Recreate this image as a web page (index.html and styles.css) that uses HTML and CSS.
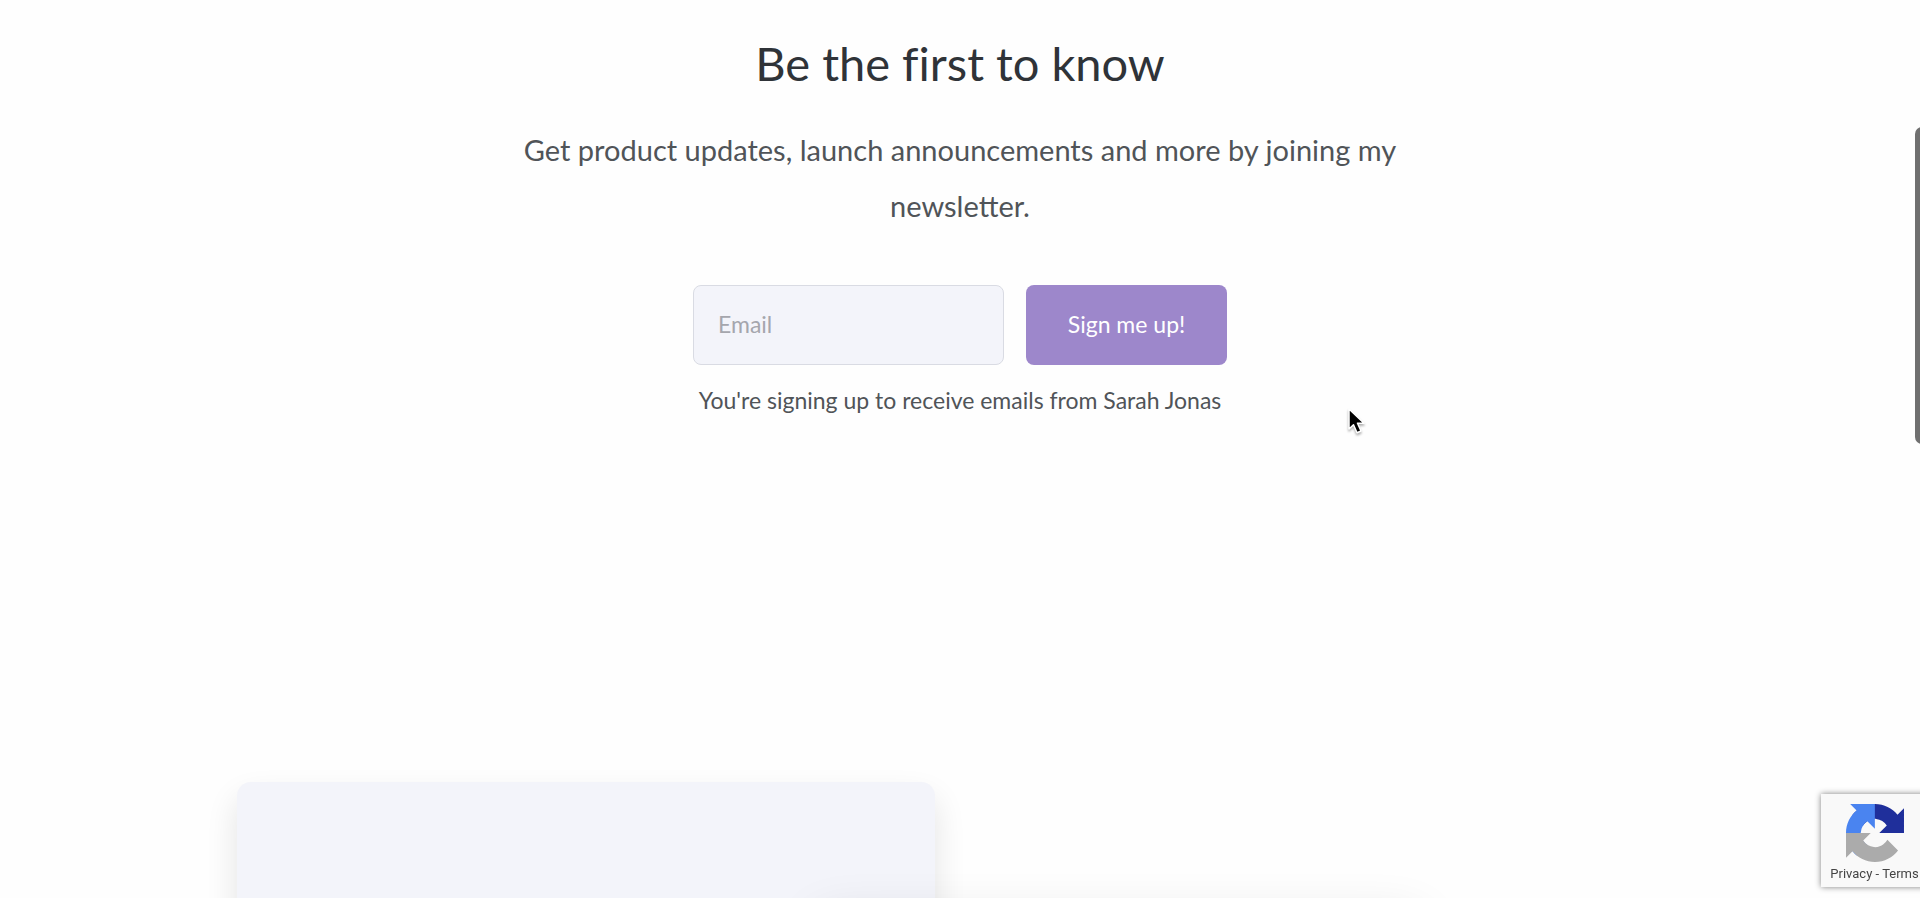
FILE: index.html
```html
<!DOCTYPE html>
<html lang="en">
<head>
<meta charset="utf-8">
<meta name="viewport" content="width=device-width, initial-scale=1">
<title>Be the first to know</title>
<link rel="stylesheet" href="styles.css">
</head>
<body>
<main class="page">
  <section class="newsletter">
    <h1 class="newsletter-title">Be the first to know</h1>
    <p class="newsletter-text">Get product updates, launch announcements and more by joining my newsletter.</p>
    <form class="signup">
      <input class="signup-email" type="email" placeholder="Email" aria-label="Email">
      <button class="signup-button" type="submit">Sign me up!</button>
    </form>
    <p class="signup-note">You're signing up to receive emails from Sarah Jonas</p>
  </section>
  <section class="showcase">
    <div class="card"></div>
    <div class="card-front"></div>
  </section>
</main>
<div class="scroll-thumb"></div>
<aside class="captcha">
  <svg class="captcha-logo" viewBox="0 0 64 64" aria-hidden="true">
    <path fill="#1f2f9b" d="M64 31.955l-.033-1.37V4.687l-7.16 7.16C50.948 4.674 42.033.093 32.05.093c-10.4 0-19.622 4.96-25.458 12.64l11.736 11.86a15.55 15.55 0 0 1 4.754-5.334c2.05-1.6 4.952-2.906 8.968-2.906.485 0 .86.057 1.135.163 4.976.393 9.288 3.14 11.828 7.124l-8.307 8.307L64 31.953"/>
    <path fill="#4a84f0" d="M31.862.094l-1.37.033H4.594l7.16 7.16C4.58 13.147 0 22.06 0 32.046c0 10.4 4.96 19.622 12.64 25.458L24.5 45.768a15.55 15.55 0 0 1-5.334-4.754c-1.6-2.05-2.906-4.952-2.906-8.968 0-.485.057-.86.163-1.135.393-4.976 3.14-9.288 7.124-11.828l8.307 8.307L31.86.095"/>
    <path fill="#ababab" d="M.001 32.045l.033 1.37v25.898l7.16-7.16c5.86 7.173 14.774 11.754 24.76 11.754 10.4 0 19.622-4.96 25.458-12.64l-11.736-11.86a15.55 15.55 0 0 1-4.754 5.334c-2.05 1.6-4.952 2.906-8.968 2.906-.485 0-.86-.057-1.135-.163-4.976-.393-9.288-3.14-11.828-7.124l8.307-8.307c-10.522.04-22.4.066-27.295-.005"/>
  </svg>
  <div class="captcha-links"><a href="#privacy">Privacy</a> - <a href="#terms">Terms</a></div>
</aside>
<svg class="cursor" viewBox="0 0 18 28" aria-hidden="true">
  <path d="M1 1v20l4.500-4.300 3.500 8 4-1.700-3.500-7.800H16z" fill="#000" stroke="#fff" stroke-width="1.500" stroke-linejoin="round"/>
</svg>
</body>
</html>
```
FILE: styles.css
```css
* {
  box-sizing: border-box;
}

body {
  margin: 0;
  background: #fefefe;
  color: #505458;
  font-family: Lato, "Open Sans", sans-serif;
}

.page {
  display: flex;
  flex-direction: column;
  height: 100vh;
  overflow: hidden;
}

.newsletter {
  display: flex;
  flex: none;
  flex-direction: column;
  align-items: center;
  padding: 31px 24px 0;
  text-align: center;
}

.newsletter-title {
  margin: 0;
  color: #2f3338;
  font-size: 47px;
  font-weight: 400;
  font-variant-ligatures: none;
  line-height: 64px;
}

.newsletter-text {
  max-width: 920px;
  margin: 27px 0 51px;
  font-size: 29px;
  line-height: 56px;
}

.signup {
  display: flex;
  gap: 22px;
}

.signup-email,
.signup-button {
  height: 80px;
  padding: 0 24px 3px;
  border-radius: 8px;
  font: inherit;
  font-size: 23px;
}

.signup-email {
  width: 311px;
  border: 1px solid #d9dbe3;
  background: #f3f4fa;
  color: #505458;
}

.signup-email::placeholder {
  color: #a5a6ad;
}

.signup-button {
  min-width: 201px;
  border: 0;
  background: #9d87cb;
  color: #fff;
}

.signup-note {
  margin: 20px 0 0;
  font-size: 23px;
  line-height: 30px;
}

.showcase {
  position: relative;
  display: grid;
  flex: 1;
  grid-template-columns: 1fr 1fr;
  width: 100%;
  max-width: 1446px;
  margin: 367px auto 0;
}

.card {
  height: 420px;
  margin-right: 25px;
  border-radius: 14px;
  background: #f3f4fa;
  box-shadow: 0 16px 32px rgba(0, 0, 0, 0.11);
}

.card-front {
  position: absolute;
  top: 136px;
  right: 18%;
  width: 42%;
  height: 320px;
  border-radius: 14px;
  box-shadow: 0 0 50px rgba(0, 0, 0, 0.12);
}

.scroll-thumb {
  position: fixed;
  top: 127px;
  right: -10px;
  width: 15px;
  height: 317px;
  border-radius: 7px;
  background: #707070;
}

.captcha {
  position: fixed;
  right: -8px;
  bottom: 11px;
  display: flex;
  flex-direction: column;
  align-items: center;
  width: 107px;
  height: 93px;
  padding-top: 10px;
  background: #f9f9f9;
  box-shadow: 0 0 6px #808080;
}

.captcha-logo {
  width: 58px;
  height: 58px;
}

.captcha-links {
  margin-top: 4px;
  color: #444;
  font-family: Roboto, sans-serif;
  font-size: 13px;
  line-height: 16px;
  white-space: nowrap;
}

.captcha-links a {
  color: inherit;
  text-decoration: none;
}

.cursor {
  position: fixed;
  top: 408px;
  left: 1348px;
  width: 18px;
  height: 28px;
  filter: drop-shadow(0 2px 1px rgba(0, 0, 0, 0.3));
}
```
